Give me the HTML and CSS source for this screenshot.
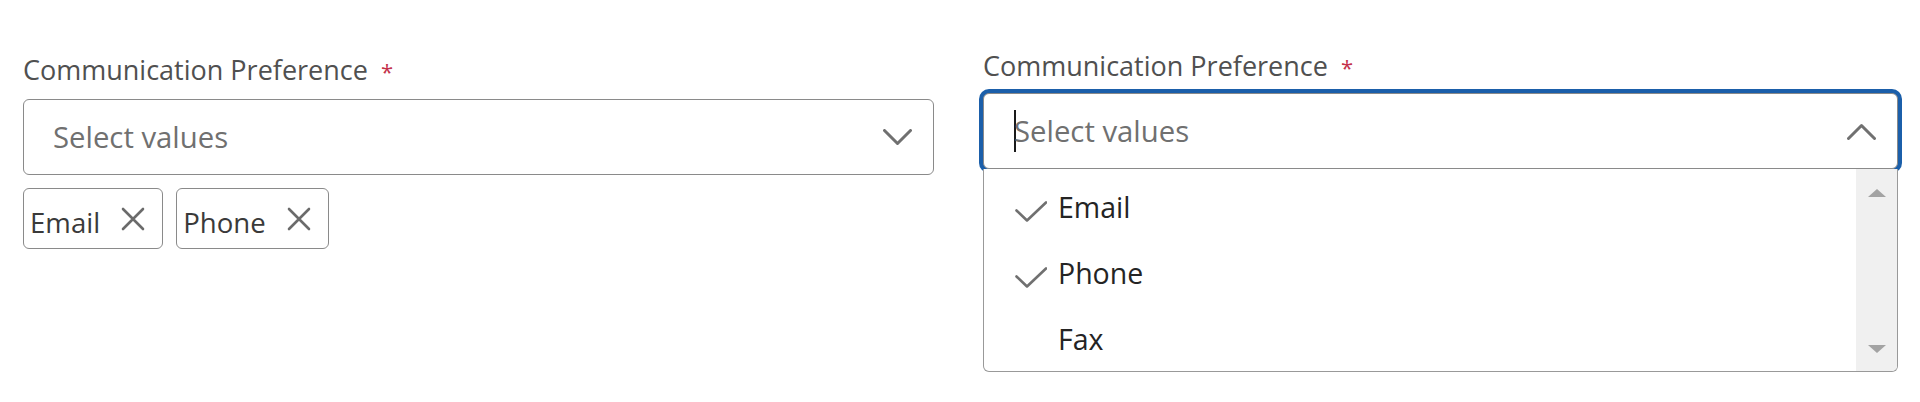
FILE: index.html
```html
<!DOCTYPE html>
<html lang="en">
<head>
<meta charset="utf-8">
<title>Communication Preference</title>
<link rel="stylesheet" href="styles.css">
</head>
<body>
<div class="page">
  <div class="field field--closed">
    <label class="label">Communication Preference<span class="req">*</span></label>
    <div class="combo">
      <span class="placeholder">Select values</span>
      <svg class="chev" width="29" height="17" viewBox="0 0 29 17"><polyline points="1.5,1.5 14.5,14.5 27.5,1.5" fill="none" stroke="#707070" stroke-width="3" stroke-linecap="round" stroke-linejoin="round"/></svg>
    </div>
    <div class="tags">
      <span class="tag"><span class="tag-text">Email</span><svg class="x" width="24" height="24" viewBox="0 0 24 24"><path d="M2 2L22 22M22 2L2 22" stroke="#6b6b6b" stroke-width="2.6" stroke-linecap="round"/></svg></span>
      <span class="tag"><span class="tag-text">Phone</span><svg class="x" width="24" height="24" viewBox="0 0 24 24"><path d="M2 2L22 22M22 2L2 22" stroke="#6b6b6b" stroke-width="2.6" stroke-linecap="round"/></svg></span>
    </div>
  </div>
  <div class="field field--open">
    <label class="label">Communication Preference<span class="req">*</span></label>
    <div class="combo-wrap">
      <div class="combo combo--focus">
        <span class="caret"></span><span class="placeholder">Select values</span>
        <svg class="chev" width="29" height="17" viewBox="0 0 29 17"><polyline points="1.5,15.5 14.5,2.5 27.5,15.5" fill="none" stroke="#707070" stroke-width="3" stroke-linecap="round" stroke-linejoin="round"/></svg>
      </div>
      <div class="listbox">
        <div class="options">
          <div class="option"><svg class="check" width="32" height="21" viewBox="0 0 32 21"><polyline points="1.5,9.5 12,19.5 31,1.5" fill="none" stroke="#707070" stroke-width="2.6" stroke-linecap="round" stroke-linejoin="round"/></svg><span>Email</span></div>
          <div class="option"><svg class="check" width="32" height="21" viewBox="0 0 32 21"><polyline points="1.5,9.5 12,19.5 31,1.5" fill="none" stroke="#707070" stroke-width="2.6" stroke-linecap="round" stroke-linejoin="round"/></svg><span>Phone</span></div>
          <div class="option"><span class="check-space"></span><span>Fax</span></div>
        </div>
        <div class="scroll">
          <span class="arrow arrow--up"></span>
          <span class="arrow arrow--down"></span>
        </div>
      </div>
    </div>
  </div>
</div>
</body>
</html>
```
FILE: styles.css
```css
* { box-sizing: border-box; }
html, body { height: 100%; }
body {
  margin: 0;
  min-height: 402px;
  background: #ffffff;
  font-family: "Open Sans", "Noto Sans", sans-serif;
}
.page {
  display: flex;
  align-items: flex-start;
  gap: 49px;
  min-height: 402px;
  padding: 46px 0 0 23px;
}
.field--closed { width: 911px; margin-top: 4px; }
.field--open { width: 915px; }
.label {
  display: block;
  font-size: 27px;
  line-height: 36px;
  padding-top: 2px;
  color: #505050;
  white-space: nowrap;
}
.field--closed .label { margin-bottom: 10px; }
.field--open .label { margin-bottom: 8px; }
.req {
  color: #c4314b;
  font-size: 22px;
  margin-left: 13px;
}
.combo {
  height: 76px;
  border: 1px solid #8a8a8a;
  border-radius: 6px;
  display: flex;
  align-items: center;
  padding: 0 21px 0 29px;
  background: #fff;
}
.combo--focus {
  padding-left: 30px;
  box-shadow: 0 0 0 4px #1b5faa;
}
.placeholder {
  flex: 1;
  font-size: 29.3px;
  line-height: 40px;
  color: #707070;
}
.caret {
  width: 2px;
  height: 42px;
  background: #1a1a1a;
  margin-right: -2px;
  flex: none;
}
.chev { flex: none; }
.tags {
  display: flex;
  gap: 13px;
  margin-top: 13px;
}
.tag {
  height: 61px;
  border: 1px solid #8a8a8a;
  border-radius: 6px;
  display: flex;
  align-items: center;
  gap: 21px;
  padding: 6px 17px 0 6px;
  font-size: 27.6px;
  color: #3a3a3a;
}
.tag .x { margin-top: -6px; flex: none; }
.combo-wrap { position: relative; }
.listbox {
  position: absolute;
  top: 100%;
  left: 0;
  right: 0;
  height: 203px;
  background: #fff;
  border: 1px solid #999;
  border-top: none;
  border-radius: 0 0 6px 6px;
  display: flex;
  overflow: hidden;
  z-index: 1;
}
.options {
  flex: 1;
  padding-top: 5px;
}
.option {
  height: 66px;
  display: flex;
  align-items: center;
  gap: 11px;
  padding-left: 31px;
  font-size: 28.5px;
  color: #242424;
}
.check { flex: none; margin-top: 8px; }
.check-space { width: 32px; flex: none; }
.scroll {
  width: 41px;
  background: #f0f0f0;
  display: flex;
  flex-direction: column;
  justify-content: space-between;
  align-items: center;
  padding: 20px 0 18px;
}
.arrow {
  width: 0;
  height: 0;
  border-left: 9px solid transparent;
  border-right: 9px solid transparent;
}
.arrow--up { border-bottom: 8px solid #a3a3a3; }
.arrow--down { border-top: 8px solid #a3a3a3; }
```
